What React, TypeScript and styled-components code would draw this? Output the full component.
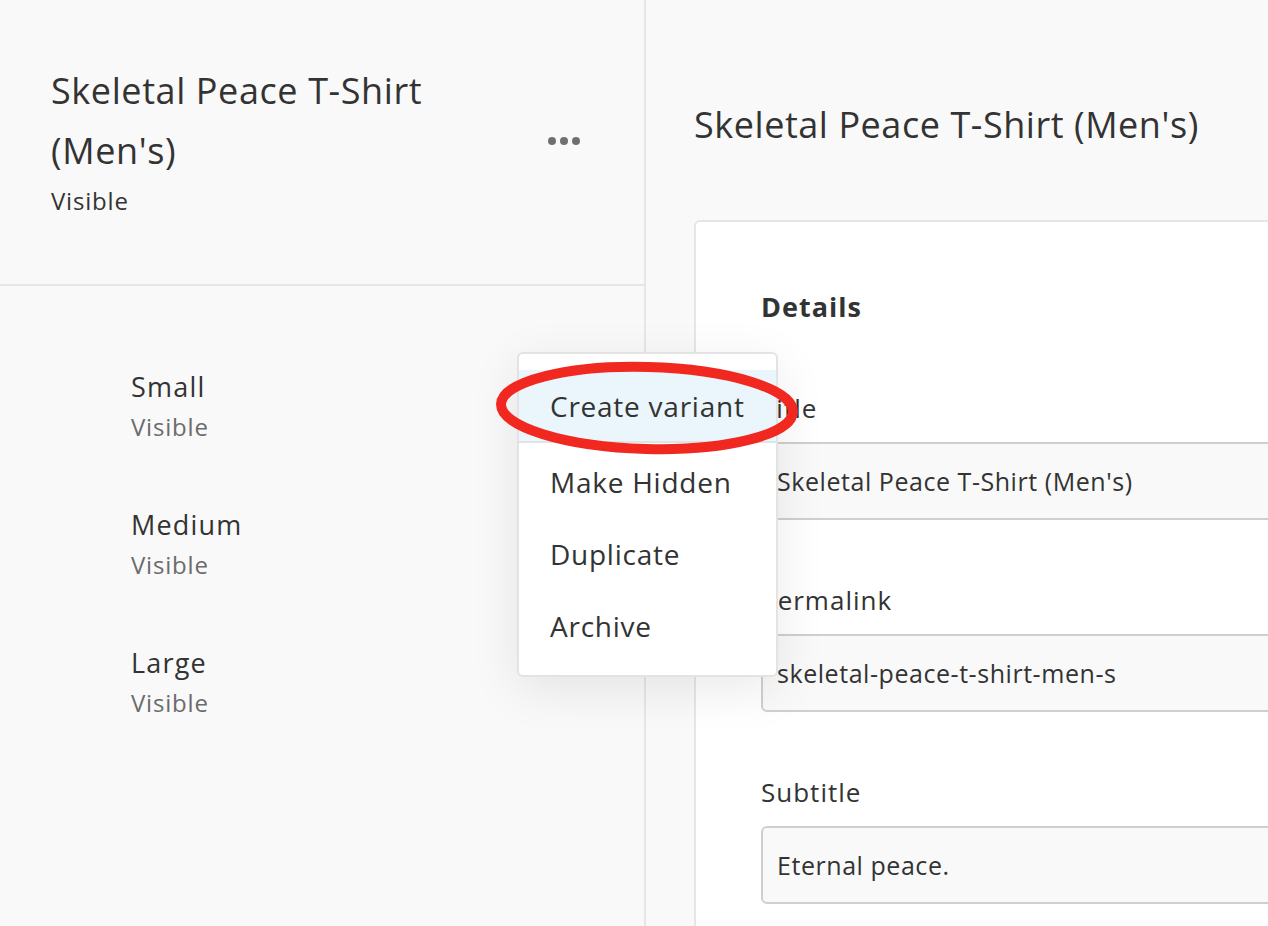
import React from "react";
import styled, { createGlobalStyle } from "styled-components";

const Global = createGlobalStyle`
  html, body { margin: 0; padding: 0; }
  body {
    font-family: "Open Sans", "Noto Sans", sans-serif;
    color: #333;
    background: #f9f9f9;
    -webkit-font-smoothing: antialiased;
  }
`;

const Page = styled.div`
  position: relative;
  display: grid;
  grid-template-columns: 646px 1fr;
  width: 1268px;
  height: 926px;
  overflow: hidden;
  background: #f9f9f9;
`;

const Sidebar = styled.aside`
  background: #f9f9f9;
  border-right: 2px solid #e6e6e6;
  display: flex;
  flex-direction: column;
`;

const SideHeader = styled.header`
  height: 286px;
  box-sizing: border-box;
  border-bottom: 2px solid #e6e6e6;
  display: flex;
  align-items: center;
  justify-content: space-between;
  padding: 0 64px 0 51px;
`;

const HeaderText = styled.div`
  align-self: flex-start;
  width: 420px;
  padding-top: 61px;
`;

const ProductName = styled.h1`
  margin: 0;
  font-size: 36px;
  line-height: 60px;
  letter-spacing: 0.6px;
  font-weight: 400;
  color: #333;
`;

const Status = styled.div`
  margin-top: 5px;
  font-size: 24px;
  line-height: 30px;
  letter-spacing: 0.8px;
  color: #333;
`;

const Dots = styled.button`
  display: flex;
  gap: 4px;
  border: 0;
  background: none;
  padding: 0;
  margin-bottom: 2px;
`;

const Dot = styled.span`
  width: 8px;
  height: 8px;
  border-radius: 50%;
  background: #707070;
`;

const VariantList = styled.ul`
  list-style: none;
  margin: 0;
  padding: 81px 0 0 131px;
  display: flex;
  flex-direction: column;
  gap: 58px;
`;

const Variant = styled.li`
  display: flex;
  flex-direction: column;
`;

const VariantName = styled.div`
  font-size: 27px;
  line-height: 40px;
  letter-spacing: 1.2px;
  color: #333;
`;

const VariantStatus = styled.div`
  font-size: 24px;
  line-height: 40px;
  letter-spacing: 0.8px;
  color: #6b6b6b;
`;

const Main = styled.main`
  padding: 95px 0 0 48px;
  overflow: hidden;
`;

const PageTitle = styled.h2`
  margin: 0;
  font-size: 36px;
  line-height: 60px;
  letter-spacing: 0.55px;
  font-weight: 400;
  color: #333;
  white-space: nowrap;
`;

const Card = styled.section`
  margin-top: 65px;
  width: 820px;
  background: #fff;
  border: 2px solid #e6e6e6;
  border-radius: 6px;
  padding: 67px 0 40px 65px;
`;

const CardTitle = styled.h3`
  margin: 0 0 68px;
  font-size: 27px;
  line-height: 36px;
  letter-spacing: 1px;
  font-weight: 700;
  color: #333;
`;

const Fields = styled.div`
  display: flex;
  flex-direction: column;
  gap: 65px;
`;

const Field = styled.label`
  display: flex;
  flex-direction: column;
  gap: 19px;
`;

const FieldLabel = styled.span`
  font-size: 26px;
  line-height: 30px;
  letter-spacing: 1px;
  color: #333;
`;

const Input = styled.div`
  box-sizing: border-box;
  height: 78px;
  background: #f9f9f9;
  border: 2px solid #cfcfcf;
  border-radius: 6px;
  padding: 0 14px;
  display: flex;
  align-items: center;
  font-size: 25px;
  letter-spacing: 0.55px;
  color: #333;
  white-space: nowrap;
`;

const Menu = styled.ul`
  position: absolute;
  left: 517px;
  top: 352px;
  width: 261px;
  box-sizing: border-box;
  margin: 0;
  padding: 16px 0;
  list-style: none;
  background: #fff;
  border: 2px solid #e3e3e3;
  border-radius: 6px;
  box-shadow: 0 12px 50px rgba(0, 0, 0, 0.09);
`;

const MenuItem = styled.li<{ $active?: boolean }>`
  height: ${(p) => (p.$active ? 73 : 72)}px;
  box-sizing: border-box;
  display: flex;
  align-items: center;
  padding-left: 31px;
  padding-top: ${(p) => (p.$active ? 0 : 6)}px;
  font-size: 28px;
  letter-spacing: 0.75px;
  color: #333;
  background: ${(p) => (p.$active ? "#ebf5fc" : "transparent")};
  border-bottom: ${(p) => (p.$active ? "2px solid #e3e3e3" : "0")};
  white-space: nowrap;
`;

const Highlight = styled.svg`
  position: absolute;
  left: 492px;
  top: 358px;
  pointer-events: none;
`;

const variants = ["Small", "Medium", "Large"];

export default function App() {
  return (
    <>
      <Global />
      <Page>
        <Sidebar>
          <SideHeader>
            <HeaderText>
              <ProductName>Skeletal Peace T-Shirt (Men's)</ProductName>
              <Status>Visible</Status>
            </HeaderText>
            <Dots aria-label="More">
              <Dot />
              <Dot />
              <Dot />
            </Dots>
          </SideHeader>
          <VariantList>
            {variants.map((v) => (
              <Variant key={v}>
                <VariantName>{v}</VariantName>
                <VariantStatus>Visible</VariantStatus>
              </Variant>
            ))}
          </VariantList>
        </Sidebar>
        <Main>
          <PageTitle>Skeletal Peace T-Shirt (Men's)</PageTitle>
          <Card>
            <CardTitle>Details</CardTitle>
            <Fields>
              <Field>
                <FieldLabel>Title</FieldLabel>
                <Input>Skeletal Peace T-Shirt (Men's)</Input>
              </Field>
              <Field>
                <FieldLabel>Permalink</FieldLabel>
                <Input>skeletal-peace-t-shirt-men-s</Input>
              </Field>
              <Field>
                <FieldLabel>Subtitle</FieldLabel>
                <Input>Eternal peace.</Input>
              </Field>
            </Fields>
          </Card>
        </Main>
        <Menu>
          <MenuItem $active>Create variant</MenuItem>
          <MenuItem>Make Hidden</MenuItem>
          <MenuItem>Duplicate</MenuItem>
          <MenuItem>Archive</MenuItem>
        </Menu>
        <Highlight width="310" height="102" viewBox="0 0 310 102">
          <ellipse
            cx="155"
            cy="50"
            rx="146"
            ry="41"
            fill="none"
            stroke="#f1281f"
            strokeWidth="10"
            transform="rotate(1.5 155 50)"
          />
        </Highlight>
      </Page>
    </>
  );
}
